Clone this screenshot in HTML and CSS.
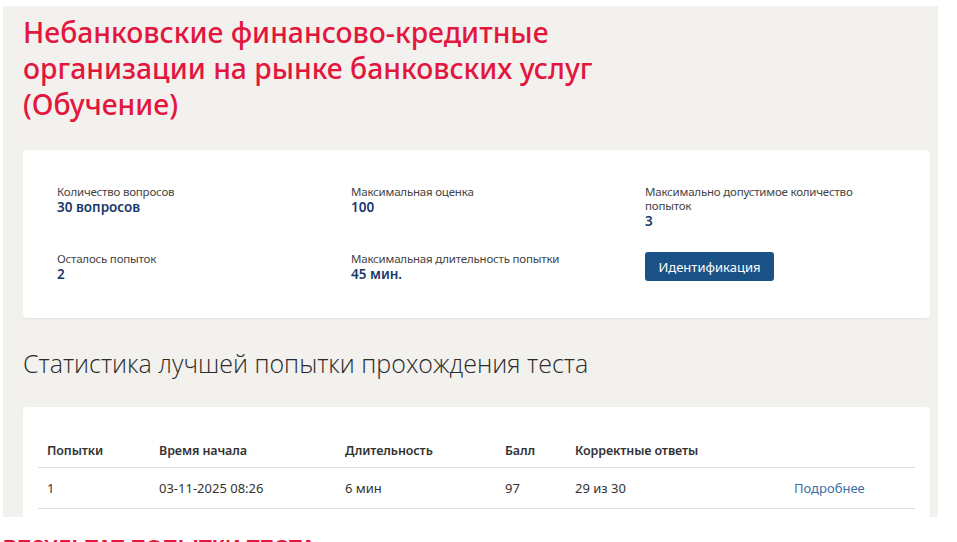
FILE: index.html
```html
<!DOCTYPE html>
<html lang="ru">
<head>
<meta charset="utf-8">
<title>Тест</title>
<link rel="stylesheet" href="styles.css">
</head>
<body>
<div class="panel">
  <h1 class="title">Небанковские финансово-кредитные<br>организации на рынке банковских услуг<br>(Обучение)</h1>
  <section class="card info">
    <div class="item">
      <div class="label">Количество вопросов</div>
      <div class="value">30 вопросов</div>
    </div>
    <div class="item">
      <div class="label">Максимальная оценка</div>
      <div class="value">100</div>
    </div>
    <div class="item">
      <div class="label">Максимально допустимое количество<br>попыток</div>
      <div class="value">3</div>
    </div>
    <div class="item">
      <div class="label">Осталось попыток</div>
      <div class="value">2</div>
    </div>
    <div class="item">
      <div class="label">Максимальная длительность попытки</div>
      <div class="value">45 мин.</div>
    </div>
    <div class="item">
      <button class="btn" type="button">Идентификация</button>
    </div>
  </section>
  <h2 class="subtitle">Статистика лучшей попытки прохождения теста</h2>
  <section class="card stats">
    <table class="tbl">
      <colgroup>
        <col class="c1"><col class="c2"><col class="c3"><col class="c4"><col class="c5"><col class="c6">
      </colgroup>
      <thead>
        <tr><th>Попытки</th><th>Время начала</th><th>Длительность</th><th>Балл</th><th>Корректные ответы</th><th></th></tr>
      </thead>
      <tbody>
        <tr><td>1</td><td>03-11-2025 08:26</td><td>6 мин</td><td>97</td><td>29 из 30</td><td><a class="more" href="#">Подробнее</a></td></tr>
      </tbody>
    </table>
  </section>
</div>
<div class="result">РЕЗУЛЬТАТ ПОПЫТКИ ТЕСТА</div>
</body>
</html>
```
FILE: styles.css
```css
html, body {
  margin: 0;
  padding: 0;
  background: #ffffff;
}
body {
  font-family: "Noto Sans", "Open Sans", sans-serif;
  color: #333333;
  overflow: hidden;
}
.panel {
  margin: 6px 0 0 3px;
  width: 935px;
  height: 511px;
  box-sizing: border-box;
  background: #f2f1ee;
  padding: 8px 8px 0 20px;
  overflow: hidden;
}
.title {
  margin: 0;
  font-family: "Noto Sans", sans-serif;
  font-weight: 500;
  font-size: 28.3px;
  line-height: 36px;
  color: #e3173e;
}
.card {
  background: #ffffff;
  border-radius: 4px;
  box-shadow: 0 1px 2px rgba(0,0,0,0.06);
}
.info {
  margin-top: 28px;
  height: 168px;
  box-sizing: border-box;
  padding: 35px 34px 0 34px;
  display: grid;
  grid-template-columns: 294px 294px 1fr;
  align-content: start;
  row-gap: 22px;
}
.label {
  font-size: 11.5px;
  line-height: 14px;
  letter-spacing: -0.2px;
  color: #444444;
}
.value {
  font-size: 13.5px;
  line-height: 17px;
  font-weight: 600;
  color: #173a6a;
}
.btn {
  margin: 0;
  border: 0;
  border-radius: 3px;
  background: #1a5288;
  color: #ffffff;
  font-family: inherit;
  font-size: 13px;
  width: 129px;
  height: 29px;
  padding: 0;
}
.subtitle {
  margin: 28px 0 0 0;
  font-family: "Open Sans", sans-serif;
  font-weight: 300;
  font-size: 25px;
  line-height: 34px;
  color: #2b2b2b;
}
.stats {
  margin-top: 27px;
  padding: 26px 15px 20px 15px;
}
.tbl {
  width: 100%;
  border-collapse: collapse;
  table-layout: fixed;
  font-size: 13px;
}
.c1 { width: 112px; }
.c2 { width: 186px; }
.c3 { width: 160px; }
.c4 { width: 70px; }
.c5 { width: 219px; }
.tbl th {
  text-align: left;
  font-weight: 600;
  font-size: 12.5px;
  letter-spacing: -0.1px;
  color: #333333;
  padding: 9px 9px 8px 9px;
  line-height: 17px;
  border-bottom: 1px solid #dedede;
}
.tbl td {
  text-align: left;
  color: #333333;
  padding: 12px 9px 11px 9px;
  line-height: 17px;
  border-bottom: 1px solid #dedede;
}
.more {
  color: #3a6ea5;
  text-decoration: none;
}
.result {
  margin: 18px 0 0 3px;
  font-family: "Liberation Sans", Arial, sans-serif;
  font-weight: 700;
  font-size: 21px;
  line-height: 24px;
  color: #e3173e;
  letter-spacing: 0.3px;
}
```
